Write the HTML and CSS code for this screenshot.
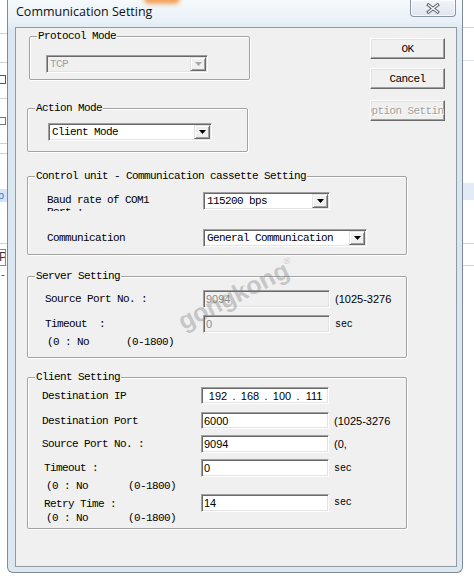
FILE: index.html
```html
<!DOCTYPE html>
<html>
<head>
<meta charset="utf-8">
<title>Communication Setting</title>
<link rel="stylesheet" href="styles.css">
</head>
<body>
<div class="screen">
  <div class="bg-left">
    <div class="bl-box bl-box1"></div>
    <div class="bl-box bl-box2"></div>
    <div class="bl-hl">p</div>
    <div class="bl-box bl-box3">P</div>
    <div class="bl-dash">-</div>
  </div>

  <div class="window">
    <div class="titlebar">
      <span class="title">Communication Setting</span>
      <div class="close">
        <svg width="14" height="11" viewBox="0 0 14 11">
          <path d="M2.5 2 L11.5 9 M11.5 2 L2.5 9" stroke="#5d6874" stroke-width="3.4" stroke-linecap="square" fill="none"/>
          <path d="M2.5 2 L11.5 9 M11.5 2 L2.5 9" stroke="#ffffff" stroke-width="1.3" stroke-linecap="square" fill="none"/>
        </svg>
      </div>
    </div>

    <div class="frame">
      <div class="client">
        <div class="top-row">
          <div class="top-groups">
            <div class="group g-protocol">
              <div class="legend">Protocol Mode</div>
              <div class="select disabled sel-protocol">
                <span class="sel-text">TCP</span>
                <span class="sel-btn"><svg width="7" height="4" viewBox="0 0 7 4"><polygon points="0,0 7,0 3.5,4"/></svg></span>
              </div>
            </div>
            <div class="group g-action">
              <div class="legend">Action Mode</div>
              <div class="select sel-action">
                <span class="sel-text">Client Mode</span>
                <span class="sel-btn"><svg width="7" height="4" viewBox="0 0 7 4"><polygon points="0,0 7,0 3.5,4"/></svg></span>
              </div>
            </div>
          </div>
          <div class="buttons">
            <div class="btn">OK</div>
            <div class="btn">Cancel</div>
            <div class="btn btn-disabled">Option Setting</div>
          </div>
        </div>

        <div class="group g-control">
          <div class="legend">Control unit - Communication cassette Setting</div>
          <div class="gbody gb-control">
            <div class="row c-row1">
              <div class="lbl-col c-lbl"><div class="wrap-lbl">Baud rate of COM1 Port :</div></div>
              <div class="select sel-baud">
                <span class="sel-text">115200 bps</span>
                <span class="sel-btn"><svg width="7" height="4" viewBox="0 0 7 4"><polygon points="0,0 7,0 3.5,4"/></svg></span>
              </div>
            </div>
            <div class="row c-row2">
              <div class="lbl-col c-lbl">Communication</div>
              <div class="select sel-comm">
                <span class="sel-text">General Communication</span>
                <span class="sel-btn"><svg width="7" height="4" viewBox="0 0 7 4"><polygon points="0,0 7,0 3.5,4"/></svg></span>
              </div>
            </div>
          </div>
        </div>

        <div class="group g-server">
          <div class="legend">Server Setting</div>
          <div class="gbody gb-server">
            <div class="row s-row1">
              <div class="lbl-col s-lbl">Source Port No. :</div>
              <div class="input disabled s-input">9094</div>
              <span class="note">(1025-3276</span>
            </div>
            <div class="row s-row2">
              <div class="lbl-col s-lbl">Timeout &nbsp;:</div>
              <div class="input disabled s-input">0</div>
              <span class="unit">sec</span>
            </div>
            <div class="hint s-hint"><span class="hint-a s-hint-a">(0 : No</span><span>(0-1800)</span></div>
          </div>
        </div>

        <div class="group g-client">
          <div class="legend">Client Setting</div>
          <div class="gbody gb-client">
            <div class="row k-row1">
              <div class="lbl-col k-lbl">Destination IP</div>
              <div class="input k-input ip">
                <span class="ip-seg">192</span><span class="ip-dot">.</span><span class="ip-seg">168</span><span class="ip-dot">.</span><span class="ip-seg">100</span><span class="ip-dot">.</span><span class="ip-seg">111</span>
              </div>
            </div>
            <div class="row k-row2">
              <div class="lbl-col k-lbl">Destination Port</div>
              <div class="input k-input">6000</div>
              <span class="note">(1025-3276</span>
            </div>
            <div class="row k-row3">
              <div class="lbl-col k-lbl">Source Port No. :</div>
              <div class="input k-input">9094</div>
              <span class="note">(0,</span>
            </div>
            <div class="row k-row4">
              <div class="lbl-col k-lbl"><span class="ind">Timeout :</span></div>
              <div class="input k-input">0</div>
              <span class="unit">sec</span>
            </div>
            <div class="hint k-hint"><span class="hint-a k-hint-a">(0 : No</span><span>(0-1800)</span></div>
            <div class="row k-row6">
              <div class="lbl-col k-lbl retry-lbl">
                <div>Retry Time :</div>
                <div class="retry-hint"><span class="hint-a k-hint-a">(0 : No</span><span>(0-1800)</span></div>
              </div>
              <div class="input k-input">14</div>
              <span class="unit unit-retry">sec</span>
            </div>
          </div>
        </div>
      </div>
    </div>
  </div>

  <div class="bg-right"></div>

  <div class="glow"></div>
  <div class="watermark">gongkong<sup>®</sup></div>
</div>
</body>
</html>
```

FILE: styles.css
```css
* {
  box-sizing: border-box;
  margin: 0;
  padding: 0;
}

html,
body {
  width: 474px;
  height: 577px;
  overflow: hidden;
  background: #ffffff;
}

body {
  font-family: "Liberation Mono", "DejaVu Sans Mono", monospace;
  font-size: 11px;
  letter-spacing: -0.6px;
  color: #000000;
}

.screen {
  position: relative;
  width: 474px;
  height: 577px;
  display: flex;
  align-items: flex-start;
  overflow: hidden;
}

/* background application strips */
.bg-left {
  width: 7px;
  height: 577px;
  flex: none;
  display: flex;
  flex-direction: column;
  background-color: #ffffff;
  background-image:
    linear-gradient(#d0d0d0, #d0d0d0),
    linear-gradient(#d0d0d0, #d0d0d0),
    linear-gradient(#d0d0d0, #d0d0d0),
    linear-gradient(#d0d0d0, #d0d0d0),
    linear-gradient(#d0d0d0, #d0d0d0),
    linear-gradient(#d0d0d0, #d0d0d0),
    linear-gradient(#d0d0d0, #d0d0d0);
  background-repeat: no-repeat;
  background-size: 100% 1px;
  background-position: 0 33px, 0 62px, 0 98px, 0 143px, 0 153px, 0 243px, 0 265px;
  font-family: "Liberation Sans", sans-serif;
  letter-spacing: 0;
}

.bl-box {
  width: 6px;
  border: 1px solid #555;
  border-left: none;
}

.bl-box1 {
  margin-top: 75px;
  height: 9px;
}

.bl-box2 {
  margin-top: 33px;
  height: 8px;
  border-color: #777;
}

.bl-hl {
  margin-top: 64px;
  height: 13px;
  background: #d6e5f5;
  color: #4a7ab0;
  font-size: 11px;
  line-height: 13px;
  text-indent: -2px;
  overflow: hidden;
}

.bl-box3 {
  margin-top: 47px;
  height: 17px;
  border-color: #888;
  font-size: 12px;
  line-height: 15px;
  color: #333;
  overflow: hidden;
  text-indent: -1px;
}

.bl-dash {
  margin-top: 2px;
  font-size: 11px;
  line-height: 12px;
  color: #444;
  text-indent: 1px;
}

.bg-right {
  width: 11px;
  height: 577px;
  flex: none;
  background-color: #ffffff;
  background-image:
    linear-gradient(#cfd4d9, #cfd4d9),
    linear-gradient(#dde3ea, #dde3ea),
    linear-gradient(#e3ecf6, #e3ecf6),
    linear-gradient(#cfd4d9, #cfd4d9),
    linear-gradient(#cfd4d9, #cfd4d9);
  background-repeat: no-repeat;
  background-size: 100% 1px, 100% 1px, 100% 17px, 100% 1px, 100% 1px;
  background-position: 0 27px, 0 60px, 0 183px, 0 243px, 0 265px;
}

/* dialog window */
.window {
  width: 456px;
  height: 573px;
  flex: none;
  display: flex;
  flex-direction: column;
  border: 1px solid #7d8b98;
  border-top: none;
  border-radius: 0 0 6px 6px;
  background: linear-gradient(180deg, #f5f9fc 0px, #e8f1f7 22px, #dbe7f0 30px, #dce7f0 100%);
}

.titlebar {
  height: 27px;
  flex: none;
  display: flex;
  align-items: flex-start;
  padding-left: 8px;
}

.title {
  font-family: "Open Sans", "Noto Sans", sans-serif;
  font-size: 12.5px;
  letter-spacing: 0;
  line-height: 24px;
  color: #111;
}

.close {
  margin-left: auto;
  margin-right: 6px;
  width: 46px;
  height: 17px;
  border: 1px solid #8995a2;
  border-top: none;
  border-radius: 0 0 4px 4px;
  background: linear-gradient(180deg, #f2f5f8, #dfe6ed);
  box-shadow: inset 0 0 0 1px rgba(255, 255, 255, 0.7);
  display: flex;
  align-items: center;
  justify-content: center;
}

.frame {
  flex: 1;
  padding: 0 5px 5px 7px;
}

.client {
  width: 442px;
  height: 540px;
  border: 1px solid #8f9ba7;
  background: #f0f0f0;
  padding: 8px 11px 0 11px;
}

/* group boxes */
.group {
  border: 1px solid #a3a3a3;
  box-shadow: inset 1px 1px 0 #ffffff, 1px 1px 0 #ffffff;
  border-radius: 2px;
}

.legend {
  width: fit-content;
  height: 12px;
  margin: -7px 0 0 7px;
  padding: 0 1px;
  background: #f0f0f0;
  line-height: 12px;
  white-space: nowrap;
}

.top-row {
  display: flex;
}

.top-groups {
  width: 223px;
  flex: none;
}

.g-protocol {
  width: 221px;
  height: 44px;
  margin-left: 2px;
}

.g-action {
  width: 221px;
  height: 44px;
  margin-top: 28px;
}

.sel-protocol {
  width: 162px;
  margin: 13px 0 0 16px;
}

.sel-action {
  width: 164px;
  margin: 9px 0 0 20px;
}

/* buttons */
.buttons {
  margin-left: auto;
  margin-top: 2px;
  width: 75px;
  display: flex;
  flex-direction: column;
}

.btn {
  height: 21px;
  display: flex;
  align-items: center;
  justify-content: center;
  overflow: hidden;
  white-space: nowrap;
  border: 1px solid;
  border-color: #ffffff #6a6a6a #6a6a6a #ffffff;
  box-shadow: inset -1px -1px 0 #a0a0a0, inset 1px 1px 0 #e3e3e3;
  background: #f0f0f0;
}

.btn + .btn {
  margin-top: 9px;
}

.btn-disabled {
  margin-top: 11px !important;
  color: #a0a0a0;
  text-shadow: 1px 1px 0 #ffffff;
}

/* select controls */
.select {
  height: 18px;
  display: flex;
  padding: 1px;
  border: 1px solid;
  border-color: #a0a0a0 #ffffff #ffffff #a0a0a0;
  box-shadow: inset 1px 1px 0 #696969, inset -1px -1px 0 #e3e3e3;
  background: #ffffff;
}

.sel-text {
  flex: 1;
  padding: 1px 0 0 2px;
  line-height: 13px;
  white-space: nowrap;
  overflow: hidden;
}

.sel-btn {
  width: 16px;
  flex: none;
  display: flex;
  align-items: center;
  justify-content: center;
  border: 1px solid;
  border-color: #e3e3e3 #696969 #696969 #e3e3e3;
  box-shadow: inset 1px 1px 0 #ffffff, inset -1px -1px 0 #a0a0a0;
  background: #f0f0f0;
}

.sel-btn svg {
  fill: #000000;
}

.select.disabled {
  background: #f0f0f0;
}

.select.disabled .sel-text {
  color: #a0a0a0;
}

.select.disabled .sel-btn svg {
  fill: #a8a8a8;
}

/* text inputs */
.input {
  height: 18px;
  flex: none;
  display: flex;
  align-items: center;
  padding-left: 2px;
  border: 1px solid;
  border-color: #a0a0a0 #ffffff #ffffff #a0a0a0;
  box-shadow: inset 1px 1px 0 #696969, inset -1px -1px 0 #e3e3e3;
  background: #ffffff;
  font-family: "Liberation Sans", Arial, sans-serif;
  font-size: 11px;
  letter-spacing: 0;
  white-space: nowrap;
}

.input.disabled {
  background: #f0f0f0;
  color: #8c8c8c;
}

.note {
  margin-left: 5px;
  font-family: "Liberation Sans", Arial, sans-serif;
  font-size: 11px;
  letter-spacing: 0;
  white-space: nowrap;
}

.unit {
  margin-left: 5px;
  font-size: 10px;
  letter-spacing: -0.1px;
}

.unit-retry {
  margin-top: 3px;
  line-height: 12px;
}

.gbody {
  display: flex;
  flex-direction: column;
}

.row {
  display: flex;
  align-items: center;
}

.lbl-col {
  flex: none;
  white-space: nowrap;
}

/* control unit group */
.g-control {
  width: 380px;
  height: 79px;
  margin-top: 24px;
}

.gb-control {
  padding-left: 19px;
}

.c-lbl {
  width: 156px;
}

.c-row1 {
  margin-top: 10px;
  height: 18px;
  align-items: flex-start;
}

.wrap-lbl {
  width: 120px;
  height: 19px;
  padding-top: 2px;
  line-height: 12px;
  white-space: normal;
  overflow: hidden;
}

.c-row2 {
  margin-top: 19px;
  height: 18px;
}

.sel-baud {
  width: 127px;
}

.sel-comm {
  width: 164px;
}

/* server group */
.g-server {
  width: 380px;
  height: 82px;
  margin-top: 21px;
}

.gb-server {
  padding-left: 17px;
}

.s-lbl {
  width: 158px;
}

.s-input {
  width: 127px;
}

.s-row1 {
  margin-top: 8px;
}

.s-row2 {
  margin-top: 7px;
}

.hint {
  display: flex;
  line-height: 12px;
  white-space: nowrap;
}

.s-hint {
  margin-top: 3px;
  padding-left: 2px;
}

.s-hint-a {
  width: 79px;
}

.hint-a {
  flex: none;
}

/* client group */
.g-client {
  width: 380px;
  height: 152px;
  margin-top: 19px;
}

.gb-client {
  padding-left: 14px;
}

.k-lbl {
  width: 159px;
}

.k-input {
  width: 128px;
}

.k-row1 {
  margin-top: 4px;
}

.k-row1 .input,
.k-row2 .input {
  height: 17px;
}

.k-row2 {
  margin-top: 8px;
}

.k-row3 {
  margin-top: 6px;
}

.k-row4 {
  margin-top: 6px;
}

.ind {
  padding-left: 2px;
}

.k-hint {
  margin-top: 3px;
  padding-left: 4px;
}

.k-hint-a {
  width: 82px;
}

.k-row6 {
  margin-top: 2px;
  align-items: flex-start;
}

.retry-lbl {
  padding: 3px 0 0 2px;
  line-height: 14px;
}

.retry-hint {
  display: flex;
  padding-left: 2px;
}

/* ip address field */
.ip {
  padding-left: 4px;
}

.ip-seg {
  width: 24px;
  text-align: center;
}

.ip-dot {
  width: 8px;
  text-align: center;
}

/* decorative overlays */
.glow {
  position: absolute;
  left: 144px;
  top: -7px;
  width: 36px;
  height: 11px;
  border-radius: 5px;
  background: #f2a25a;
  filter: blur(2px);
}

.watermark {
  position: absolute;
  left: 171px;
  top: 274px;
  transform: rotate(-27deg);
  font-family: "Liberation Sans", Arial, sans-serif;
  font-weight: bold;
  font-size: 25px;
  letter-spacing: 0;
  line-height: 28px;
  color: rgba(120, 120, 120, 0.36);
  white-space: nowrap;
  pointer-events: none;
}

.watermark sup {
  font-size: 9px;
  vertical-align: 12px;
  font-weight: normal;
}
```
